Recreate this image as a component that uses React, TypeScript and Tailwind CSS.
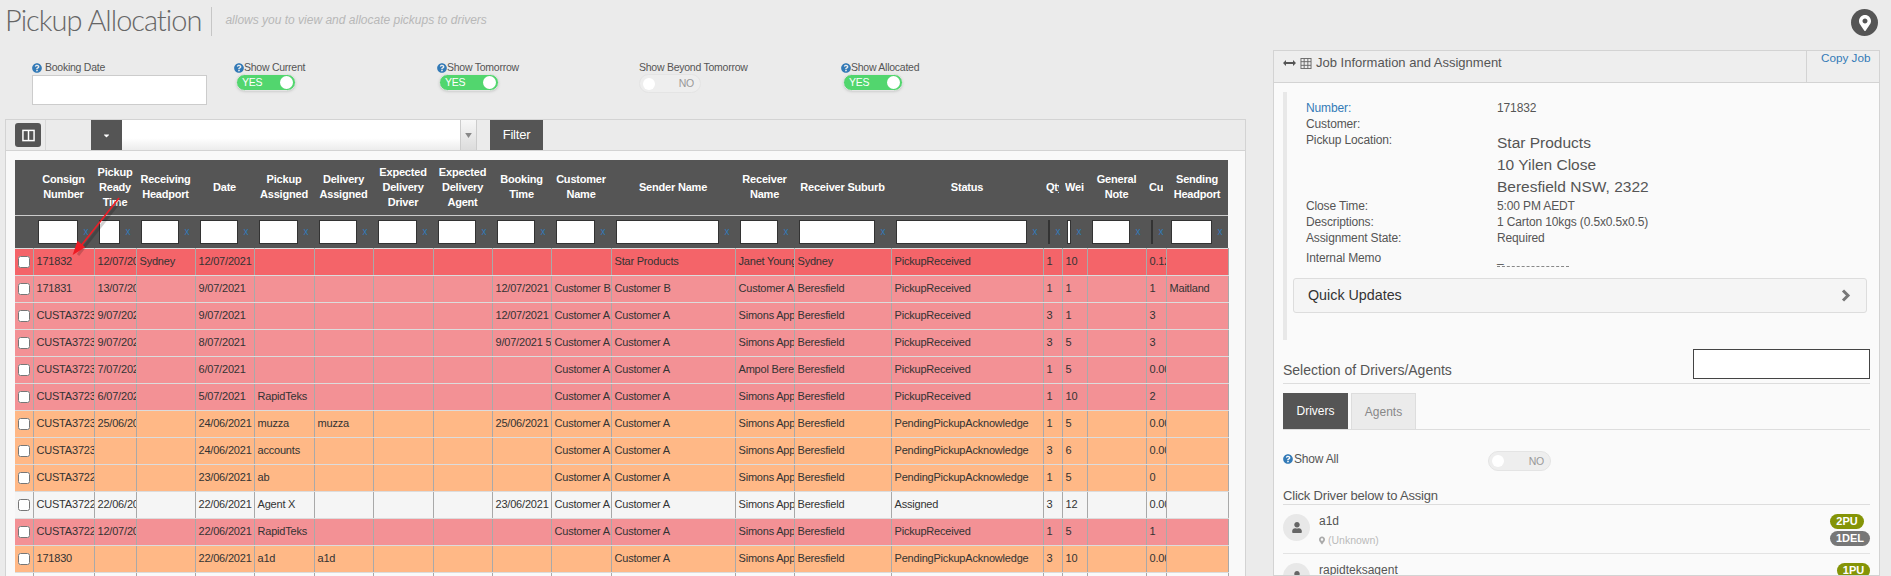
import React from "react";
import { FaQuestionCircle, FaUser, FaMapMarkerAlt, FaCaretDown } from "react-icons/fa";

const F = "font-['Liberation_Sans','Arial',sans-serif]";

const cols = [
  { w: "w-[18px]", t: "" },
  { w: "w-[61px]", t: "Consign Number" },
  { w: "w-[42px]", t: "Pickup Ready Time" },
  { w: "w-[59px]", t: "Receiving Headport" },
  { w: "w-[59px]", t: "Date" },
  { w: "w-[60px]", t: "Pickup Assigned" },
  { w: "w-[59px]", t: "Delivery Assigned" },
  { w: "w-[60px]", t: "Expected Delivery Driver" },
  { w: "w-[59px]", t: "Expected Delivery Agent" },
  { w: "w-[59px]", t: "Booking Time" },
  { w: "w-[60px]", t: "Customer Name" },
  { w: "w-[124px]", t: "Sender Name" },
  { w: "w-[59px]", t: "Receiver Name" },
  { w: "w-[97px]", t: "Receiver Suburb" },
  { w: "w-[152px]", t: "Status" },
  { w: "w-[19px]", t: "Qty" },
  { w: "w-[25px]", t: "Weight" },
  { w: "w-[59px]", t: "General Note" },
  { w: "w-[20px]", t: "Cubic" },
  { w: "w-[62px]", t: "Sending Headport" },
];

const RED = "bg-[#f46469]";
const PINK = "bg-[#f39195]";
const ORANGE = "bg-[#ffb886]";
const GREY = "bg-[#f5f5f5]";
const PR = "PickupReceived";
const PP = "PendingPickupAcknowledge";
const CA = "Customer A";
const SA = "Simons Apparel";
const BE = "Beresfield";

const rows: { c: string; v: string[] }[] = [
  { c: RED, v: ["171832", "12/07/2021", "Sydney", "12/07/2021", "", "", "", "", "", "", "Star Products", "Janet Young", "Sydney", PR, "1", "10", "", "0.125", ""] },
  { c: PINK, v: ["171831", "13/07/2021", "", "9/07/2021", "", "", "", "", "12/07/2021", "Customer B", "Customer B", CA, BE, PR, "1", "1", "", "1", "Maitland"] },
  { c: PINK, v: ["CUSTA3723", "9/07/2021", "", "9/07/2021", "", "", "", "", "12/07/2021", CA, CA, SA, BE, PR, "3", "1", "", "3", ""] },
  { c: PINK, v: ["CUSTA3723", "9/07/2021", "", "8/07/2021", "", "", "", "", "9/07/2021 5:00", CA, CA, SA, BE, PR, "3", "5", "", "3", ""] },
  { c: PINK, v: ["CUSTA3723", "7/07/2021", "", "6/07/2021", "", "", "", "", "", CA, CA, "Ampol Beresfield", BE, PR, "1", "5", "", "0.001", ""] },
  { c: PINK, v: ["CUSTA3723", "6/07/2021", "", "5/07/2021", "RapidTeks", "", "", "", "", CA, CA, SA, BE, PR, "1", "10", "", "2", ""] },
  { c: ORANGE, v: ["CUSTA3723", "25/06/2021", "", "24/06/2021", "muzza", "muzza", "", "", "25/06/2021", CA, CA, SA, BE, PP, "1", "5", "", "0.001", ""] },
  { c: ORANGE, v: ["CUSTA3723", "", "", "24/06/2021", "accounts", "", "", "", "", CA, CA, SA, BE, PP, "3", "6", "", "0.001", ""] },
  { c: ORANGE, v: ["CUSTA3722", "", "", "23/06/2021", "ab", "", "", "", "", CA, CA, SA, BE, PP, "1", "5", "", "0", ""] },
  { c: GREY, v: ["CUSTA3722", "22/06/2021", "", "22/06/2021", "Agent X", "", "", "", "23/06/2021", CA, CA, SA, BE, "Assigned", "3", "12", "", "0.001", ""] },
  { c: PINK, v: ["CUSTA3722", "12/07/2021", "", "22/06/2021", "RapidTeks", "", "", "", "", CA, CA, SA, BE, PR, "1", "5", "", "1", ""] },
  { c: ORANGE, v: ["171830", "", "", "22/06/2021", "a1d", "a1d", "", "", "", "", CA, SA, BE, PP, "3", "10", "", "0.001", ""] },
  { c: "bg-[#fafafa]", v: Array(19).fill("") },
];

function Help({ className = "" }: { className?: string }) {
  return <FaQuestionCircle className={`text-[#337ab7] w-[10px] h-[10px] shrink-0 ${className}`} />;
}

function On({ w }: { w: string }) {
  return (
    <div className={`${w} h-[17px] ml-[2px] rounded-full bg-[#52d66e] border border-[#e4e4e4] flex items-center justify-between pl-[5px] pr-[2px] shadow-sm`}>
      <span className="text-[10.5px] tracking-[-0.2px] text-white leading-none">YES</span>
      <span className="w-[13px] h-[13px] rounded-full bg-white" />
    </div>
  );
}

function Off({ w, h }: { w: string; h: string }) {
  return (
    <div className={`${w} ${h} rounded-full bg-[#eeeeee] border border-[#e4e4e4] flex items-center justify-between pl-[3px] pr-[6px]`}>
      <span className="w-[12px] h-[12px] rounded-full bg-white" />
      <span className="text-[10.5px] tracking-[-0.2px] text-[#999] leading-none">NO</span>
    </div>
  );
}

function Label({ children, help = true }: { children: string; help?: boolean }) {
  return (
    <div className="flex items-center h-[13px] text-[10.5px] tracking-[-0.25px] leading-none text-[#555]">
      {help && <Help />}
      <span>{children}</span>
    </div>
  );
}

function Info({ k, v, blue = false }: { k: string; v?: string; blue?: boolean }) {
  return (
    <div className="flex h-[16px] items-center">
      <div className={`w-[191px] ${blue ? "text-[#337ab7]" : "text-[#555]"}`}>{k}</div>
      <div className="text-[#555]">{v}</div>
    </div>
  );
}

function Driver({ name, badges }: { name: string; badges: { t: string; c: string; w: string; m?: string }[] }) {
  return (
    <div className="flex border-b border-[#e3e3e3] h-[49px] pt-[9px]">
      <div className="w-[27px] h-[27px] rounded-full bg-[#e8e8e8] flex items-center justify-center mr-[9px]">
        <FaUser className="w-[10px] h-[11px] text-[#666]" />
      </div>
      <div className="flex-1 -mt-px">
        <div className="text-[12px] leading-[16px] text-[#555]">{name}</div>
        <div className="flex items-center mt-[4px] text-[10.5px] leading-[14px] text-[#bbb]">
          <FaMapMarkerAlt className="w-[6px] h-[9px] text-[#aaa] mr-[3px]" />
          <span>(Unknown)</span>
        </div>
      </div>
      <div className="flex flex-col items-end gap-[2px]">
        {badges.map((b) => (
          <span key={b.t} className={`${b.c} ${b.w} ${b.m ?? ""} h-[15px] rounded-full text-white font-bold text-[11px] leading-[15px] text-center`}>{b.t}</span>
        ))}
      </div>
    </div>
  );
}

export default function App() {
  return (
    <div className={`h-[576px] overflow-hidden bg-[#ebebeb] ${F}`}>
      {/* page head */}
      <div className="h-[50px] flex pl-[5px] pr-[13px]">
        <h1 className="font-['Lato',sans-serif] font-light text-[29px] tracking-[-1px] leading-[36px] h-[36px] mt-[2px] text-[#666]">Pickup Allocation</h1>
        <div className="w-px h-[29px] bg-[#c6c6c6] ml-[10px] mt-[7px]" />
        <div className="ml-[13px] mt-[13px] italic text-[12px] leading-[14px] text-[#b8b8b8]">allows you to view and allocate pickups to drivers</div>
        <div className="ml-auto mt-[9px] w-[27px] h-[27px] rounded-full bg-[#555] flex items-center justify-center">
          <FaMapMarkerAlt className="w-[12px] h-[16px] text-white" />
        </div>
      </div>

      <div className="flex pl-[5px] gap-[27px]">
        {/* left */}
        <div className="w-[1241px] shrink-0">
          <div className="h-[69px] flex pl-[27px] pt-[11px]">
            <div className="w-[202px]">
              <div className="flex items-center gap-[3px] h-[13px] text-[10.5px] tracking-[-0.25px] leading-none text-[#555]">
                <Help />
                <span>Booking Date</span>
              </div>
              <div className="w-[175px] h-[30px] mt-px bg-white border border-[#ccc]" />
            </div>
            <div className="w-[203px]">
              <Label>Show Current</Label>
              <On w="w-[60px]" />
            </div>
            <div className="w-[202px]">
              <Label>Show Tomorrow</Label>
              <On w="w-[60px]" />
            </div>
            <div className="w-[202px]">
              <Label help={false}>Show Beyond Tomorrow</Label>
              <Off w="w-[62px]" h="h-[19px]" />
            </div>
            <div>
              <Label>Show Allocated</Label>
              <On w="w-[60px]" />
            </div>
          </div>

          {/* panel */}
          <div className="border border-[#d3d3d3] border-b-0 h-[457px] relative">
            <div className="h-[31px] flex items-start border-b border-[#d3d3d3]">
              <div className="h-[30px] w-[40px] border-r border-[#d8d8d8] pl-[9px] pt-[3px] shrink-0">
                <button className="w-[26px] h-[24px] rounded-[3px] bg-[#555] flex items-center justify-center">
                  <svg viewBox="0 0 14 14" className="w-[13px] h-[13px]" fill="none" stroke="#fff" strokeWidth="1.6">
                    <rect x="1" y="1.5" width="12" height="11" />
                    <path d="M7 1.5v11" />
                  </svg>
                </button>
              </div>
              <div className="ml-[45px] w-[31px] h-[30px] bg-[#555] flex items-center justify-center">
                <FaCaretDown className="w-[9px] h-[9px] text-white" />
              </div>
              <div className="w-[338px] h-[30px] bg-gradient-to-b from-white from-60% to-[#ececec]" />
              <div className="w-[17px] h-[30px] bg-gradient-to-b from-[#f7f7f7] to-[#dcdcdc] border-x border-[#ccc] flex items-center justify-center">
                <svg viewBox="0 0 8 6" className="w-[7px] h-[5px]"><path d="M0 0h8L4 6z" fill="#888" /></svg>
              </div>
              <button className="ml-[13px] w-[53px] h-[30px] bg-[#555] text-white text-[13px] tracking-[-0.2px]">Filter</button>
            </div>

            <div className="bg-[#f9f9f9] h-[425px] pl-[9px] pt-[9px] overflow-hidden">
              <table className="table-fixed border-collapse w-[1213px] text-[11px] tracking-[-0.2px] text-[#333]">
                <colgroup>
                  {cols.map((c, i) => <col key={i} className={c.w} />)}
                </colgroup>
                <thead>
                  <tr className="h-[55px] bg-[#555]">
                    {cols.map((c, i) => (
                      <th key={i} className="px-[3px] font-bold text-white text-center leading-[15px]">
                        <div className={`overflow-hidden ${i === 15 || i === 16 || i === 18 ? "whitespace-nowrap" : ""}`}>{c.t}</div>
                      </th>
                    ))}
                  </tr>
                  <tr className="h-[33px] bg-[#555] border-t border-[#ccc]">
                    {cols.map((c, i) => (
                      <th key={i} className="p-0">
                        {i > 0 && (
                          <div className="flex items-center pl-[5px]">
                            <input aria-label={c.t} className="flex-1 min-w-0 h-[24px] bg-white border border-[#333] rounded-none" />
                            <span className="w-[16px] shrink-0 text-[#337ab7] text-[10px] font-normal text-center">x</span>
                          </div>
                        )}
                      </th>
                    ))}
                  </tr>
                </thead>
                <tbody>
                  {rows.map((r, ri) => (
                    <tr key={ri} className={`h-[27px] ${r.c}`}>
                      <td className="border border-l-0 border-y-[#dcdcdc] border-r-[#a9a9a9] text-center p-0">
                        <input type="checkbox" aria-label="select" className="block mx-auto w-[12px] h-[12px]" />
                      </td>
                      {r.v.map((v, ci) => (
                        <td key={ci} className="border border-l-0 border-y-[#dcdcdc] border-r-[#a9a9a9] px-[3px] whitespace-nowrap overflow-hidden">{v}</td>
                      ))}
                    </tr>
                  ))}
                </tbody>
              </table>
            </div>

            {/* arrow drawn over the table */}
            <svg className="absolute left-[53px] top-[73px] w-[80px] h-[70px] pointer-events-none" viewBox="0 0 80 70" fill="none">
              <path d="M60 5 L17 60" stroke="#000" strokeOpacity="0.18" strokeWidth="3" transform="translate(2 2)" />
              <path d="M60 5 L21 54" stroke="#ee1c25" strokeWidth="1.6" />
              <path d="M13.6 62 L18.5 47.8 L26.3 54.2 Z" fill="#ee1c25" />
            </svg>
          </div>
        </div>

        {/* right */}
        <div className="w-[607px] shrink-0 border border-[#d3d3d3] bg-[#fafafa] h-[526px] overflow-hidden">
          <div className="h-[32px] flex bg-[#eeeeee] border-b border-[#d3d3d3]">
            <div className="flex-1 flex items-start pt-[4px] pl-[9px] gap-[4px] text-[13px] leading-[16px] font-medium text-[#555]">
              <svg viewBox="0 0 13 8" className="w-[13px] h-[8px] mt-[4px]" fill="#555">
                <path d="M0 4l3-3v2h7V1l3 3-3 3V5H3v2z" />
              </svg>
              <svg viewBox="0 0 12 12" className="w-[12px] h-[11px] mt-[3px]" fill="none" stroke="#666" strokeWidth="1">
                <rect x="0.5" y="0.5" width="11" height="11" />
                <path d="M0.5 4h11M0.5 8h11M4 .5v11M8 .5v11" />
              </svg>
              <span>Job Information and Assignment</span>
            </div>
            <div className="w-[73px] border-l border-[#d3d3d3] text-[#337ab7] text-[11.7px] pl-[14px] leading-[14px]">Copy Job</div>
          </div>

          <div className="px-[9px]">
            <div className="mt-[9px] h-[248px] border-l-[4px] border-[#e8e8e8] text-[12px] tracking-[-0.13px]">
              <div className="pl-[19px] pt-[8px] h-[186px]">
                <Info k="Number:" v="171832" blue />
                <Info k="Customer:" />
                <div className="flex h-[16px]">
                  <div className="w-[191px] text-[#555] leading-[16px]">Pickup Location:</div>
                  <div className="text-[15.5px] tracking-normal leading-[22px] text-[#555]">
                    Star Products<br />10 Yilen Close<br />Beresfield NSW, 2322
                  </div>
                </div>
                <div className="h-[50px]" />
                <Info k="Close Time:" v="5:00 PM AEDT" />
                <Info k="Descriptions:" v="1 Carton 10kgs (0.5x0.5x0.5)" />
                <Info k="Assignment State:" v="Required" />
                <div className="flex h-[22px] items-start">
                  <div className="w-[191px] mt-[4px] leading-[16px] text-[#555]">Internal Memo</div>
                  <div className="w-[72px] mt-[5px] h-[16px] border-b border-dashed border-[#888] text-[#555] leading-[15px]">_</div>
                </div>
              </div>
              <div className="ml-[6px] h-[35px] w-[574px] border border-[#ddd] rounded-[3px] bg-[#f5f5f5] flex items-center justify-between pl-[14px] pr-[15px] text-[14.3px] tracking-normal text-[#333]">
                <span>Quick Updates</span>
                <svg viewBox="0 0 10 13" className="w-[10px] h-[13px]" fill="none" stroke="#777" strokeWidth="3">
                  <path d="M2 1.5l5 5-5 5" />
                </svg>
              </div>
            </div>

            {/* selection */}
            <div className="h-[44px] flex justify-between border-b border-[#ddd] relative">
              <div className="self-end pb-[4px] text-[14px] leading-[18px] text-[#555]">Selection of Drivers/Agents</div>
              <input aria-label="search" className="mt-[9px] w-[177px] h-[30px] bg-white border border-[#444] rounded-none" />
            </div>
            <div className="mt-[9px] flex gap-[3px] border-b border-[#ddd] h-[37px] text-[12px]">
              <div className="w-[65px] h-[36px] bg-[#555] text-white flex items-center justify-center">Drivers</div>
              <div className="w-[65px] h-[36px] bg-[#ebebeb] border border-[#ddd] border-b-0 text-[#888] flex items-center justify-center">Agents</div>
            </div>
            <div className="mt-[21px] flex h-[20px]">
              <div className="w-[205px] flex items-start pt-[1px] text-[12px] tracking-[-0.2px] leading-[14px] text-[#555]">
                <Help className="mt-[2px]" />
                <span className="ml-px">Show All</span>
              </div>
              <Off w="w-[63px]" h="h-[20px]" />
            </div>
            <div className="mt-[17px] h-[16px] text-[13px] tracking-[-0.2px] leading-[16px] text-[#555]">Click Driver below to Assign</div>
            <div className="border-t border-[#ddd]">
              <Driver name="a1d" badges={[{ t: "2PU", c: "bg-[#849407]", w: "w-[34px]", m: "mr-[6px]" }, { t: "1DEL", c: "bg-[#777]", w: "w-[40px]" }]} />
              <Driver name="rapidteksagent" badges={[{ t: "1PU", c: "bg-[#849407]", w: "w-[33px]" }]} />
            </div>
          </div>
        </div>
      </div>
    </div>
  );
}
